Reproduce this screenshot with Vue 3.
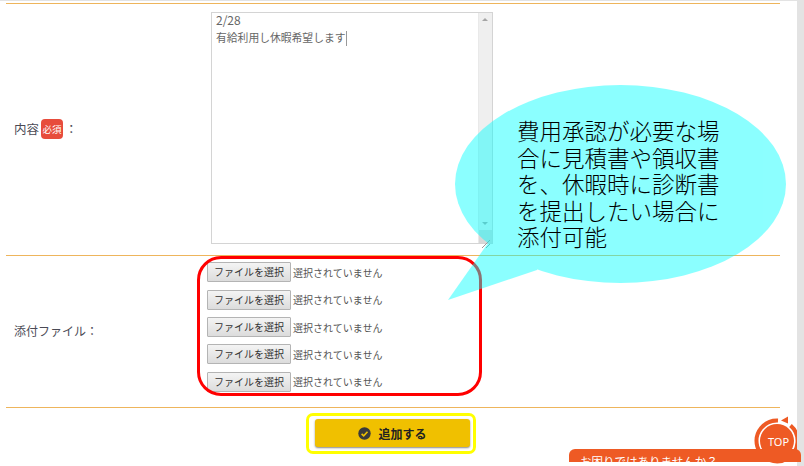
<script setup>
const fileRows = [1, 2, 3, 4, 5]
</script>

<template>
  <div class="page">
    <div class="form">
      <div class="row row-content">
        <div class="label label-content">内容<span class="req">必須</span><span class="colon">：</span></div>
        <div class="field">
          <div class="textarea">
            <div class="ta-text"><span class="date">2/28</span><br />有給利用し休暇希望します<span class="caret"></span></div>
            <div class="ta-scroll">
              <span class="arrow up"></span>
              <span class="arrow down"></span>
              <span class="grip">
                <svg width="12" height="12" viewBox="0 0 12 12">
                  <path d="M3 11 L11 3 M7 11 L11 7" stroke="#999" stroke-width="1" fill="none" />
                </svg>
              </span>
            </div>
          </div>
        </div>
      </div>
      <div class="row row-files">
        <div class="label label-files">添付ファイル：</div>
        <div class="field files">
          <div v-for="n in fileRows" :key="n" class="file">
            <span class="file-btn">ファイルを選択</span>
            <span class="file-none">選択されていません</span>
          </div>
        </div>
      </div>
      <div class="submit">
        <div class="submit-btn">
          <svg width="13" height="13" viewBox="0 0 13 13">
            <circle cx="6.5" cy="6.5" r="6.2" fill="#3a3a3a" />
            <path d="M3.6 6.8 L5.7 8.8 L9.5 4.8" stroke="#f0c000" stroke-width="1.6" fill="none" />
          </svg>
          <span>追加する</span>
        </div>
      </div>
    </div>

    <div class="red-box"></div>
    <div class="yellow-box"></div>

    <svg class="callout" width="804" height="466" viewBox="0 0 804 466">
      <g fill="#00ffff" opacity="0.45">
        <ellipse cx="620.5" cy="184" rx="165.5" ry="99" />
        <polygon points="488,243 448,300 537,270 560,200" />
      </g>
    </svg>
    <div class="callout-text">費用承認が必要な場合に見積書や領収書を、休暇時に診断書を提出したい場合に添付可能</div>

    <svg class="top-btn" width="50" height="50" viewBox="0 0 50 50">
      <path d="M25 5.5 A20.5 20.5 0 1 0 37.5 10.5" stroke="#ee5a24" stroke-width="4" fill="none" />
      <path d="M28 5.5 L35 1.5 L35 8.5 Z" fill="#ee5a24" />
      <circle cx="24" cy="26" r="17" fill="#ee5a24" />
      <text x="25.5" y="30.5" text-anchor="middle" class="top-text">TOP</text>
    </svg>

    <div class="help">お困りではありませんか？</div>
    <div class="scrollbar"></div>
  </div>
</template>

<style scoped>
.page {
  position: relative;
  width: 804px;
  height: 466px;
  overflow: hidden;
  background: #fff;
  border-top: 1px solid #e3e3e3;
  box-sizing: border-box;
  font-family: "Noto Sans CJK JP", "Noto Sans", sans-serif;
  color: #555;
}
.form {
  margin: 2px 0 0 6px;
  width: 774px;
  border-top: 1px solid #eeb55c;
}
.row {
  display: flex;
  align-items: center;
  border-bottom: 1px solid #eeb55c;
}
.row-content {
  height: 251px;
}
.row-files {
  height: 151px;
}
.label {
  width: 205px;
  padding-left: 8px;
  box-sizing: border-box;
  font-size: 12px;
  display: flex;
  align-items: center;
  color: #4a4a55;
}
.label-content {
  font-size: 12.5px;
  margin-top: -2px;
}
.label-files {
  margin-top: -2px;
}
.req {
  display: inline-block;
  width: 22px;
  height: 20px;
  line-height: 20px;
  margin-left: 2px;
  border-radius: 4px;
  background: #e74c3c;
  color: #fff;
  font-size: 9.5px;
  text-align: center;
}
.colon {
  margin-left: 2px;
}
.textarea {
  width: 282px;
  height: 232px;
  box-sizing: border-box;
  border: 1px solid #d4d4d4;
  display: flex;
  justify-content: space-between;
  margin-top: -4px;
}
.ta-text {
  padding: 0 4px;
  margin-top: -2px;
  font-size: 10.8px;
  line-height: 17px;
  color: #666;
}
.date {
  font-size: 12px;
}
.caret {
  display: inline-block;
  width: 1px;
  height: 15px;
  background: #999;
  vertical-align: middle;
}
.ta-scroll {
  position: relative;
  width: 13px;
  background: #efefef;
  border-left: 1px solid #e9e9e9;
}
.arrow {
  position: absolute;
  left: 3px;
  width: 0;
  height: 0;
  border-left: 3px solid transparent;
  border-right: 3px solid transparent;
}
.arrow.up {
  top: 5px;
  border-bottom: 3px solid #a5a5a5;
}
.arrow.down {
  bottom: 18px;
  border-top: 3px solid #a5a5a5;
}
.grip {
  position: absolute;
  right: 0;
  bottom: 0;
  width: 13px;
  height: 13px;
  background: #d8d8d8;
}
.files {
  display: flex;
  flex-direction: column;
  gap: 7.3px;
  margin: -9px 0 0 -5px;
}
.file {
  display: flex;
  align-items: center;
  height: 20px;
  padding-left: 1px;
}
.file-btn {
  width: 84px;
  height: 20px;
  box-sizing: border-box;
  border: 1px solid #b4b4b4;
  border-radius: 1px;
  background: linear-gradient(#f4f4f4, #dcdcdc);
  color: #333;
  font-size: 10px;
  line-height: 17px;
  text-align: center;
}
.file-none {
  margin-left: 2px;
  font-size: 10px;
  color: #555;
}
.submit {
  display: flex;
  justify-content: flex-start;
  padding: 11px 0 0 309px;
}
.submit-btn {
  width: 155px;
  height: 28px;
  box-sizing: border-box;
  border-radius: 3px;
  background: #f0c000;
  box-shadow: 0 1px 2px #888;
  display: flex;
  align-items: center;
  justify-content: center;
  gap: 7px;
  color: #222;
  font-size: 12px;
  font-weight: 700;
}
.red-box {
  position: absolute;
  left: 197px;
  top: 255px;
  width: 285px;
  height: 140px;
  box-sizing: border-box;
  border: 3px solid #ff0000;
  border-radius: 24px;
}
.yellow-box {
  position: absolute;
  left: 306px;
  top: 412px;
  width: 170px;
  height: 41px;
  box-sizing: border-box;
  border: 3px solid #ffff00;
  border-radius: 7px;
}
.callout {
  position: absolute;
  left: 0;
  top: -1px;
}
.callout-text {
  position: absolute;
  left: 517px;
  top: 116px;
  width: 206px;
  font-size: 22.5px;
  line-height: 26.6px;
  font-weight: 300;
  color: #000;
}
.top-btn {
  position: absolute;
  left: 753px;
  top: 414px;
}
.top-text {
  font-family: "Noto Sans", sans-serif;
  font-size: 11px;
  fill: #fff;
}
.help {
  position: absolute;
  left: 569px;
  top: 448px;
  width: 232px;
  height: 13px;
  overflow: hidden;
  box-sizing: border-box;
  padding: 4px 0 0 11px;
  border-radius: 6px 6px 0 0;
  background: #ee5a24;
  color: #fff;
  font-size: 11.5px;
  line-height: 16px;
  z-index: 2;
}
.scrollbar {
  position: absolute;
  right: 0;
  top: 0;
  width: 7px;
  height: 100%;
  background: #e3e3e3;
}
</style>
